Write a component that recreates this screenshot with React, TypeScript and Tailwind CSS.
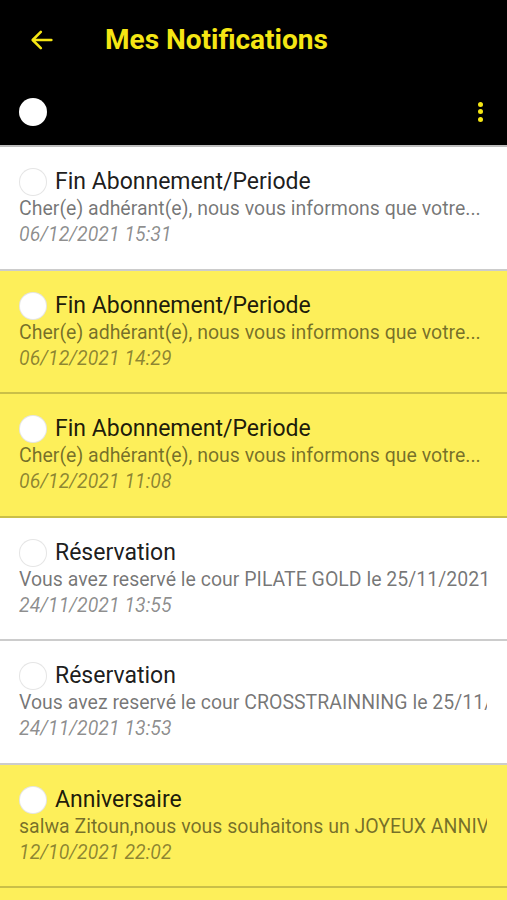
import React from "react";

type Item = { title: string; body: string; date: string; unread: boolean };

const items: Item[] = [
  { title: "Fin Abonnement/Periode", body: "Cher(e) adhérant(e), nous vous informons que votre...", date: "06/12/2021 15:31", unread: false },
  { title: "Fin Abonnement/Periode", body: "Cher(e) adhérant(e), nous vous informons que votre...", date: "06/12/2021 14:29", unread: true },
  { title: "Fin Abonnement/Periode", body: "Cher(e) adhérant(e), nous vous informons que votre...", date: "06/12/2021 11:08", unread: true },
  { title: "Réservation", body: "Vous avez reservé le cour PILATE GOLD le 25/11/2021 à 18:00", date: "24/11/2021 13:55", unread: false },
  { title: "Réservation", body: "Vous avez reservé le cour CROSSTRAINNING le 25/11/2021 à 19:00", date: "24/11/2021 13:53", unread: false },
  { title: "Anniversaire", body: "salwa Zitoun,nous vous souhaitons un JOYEUX ANNIVERSAIRE", date: "12/10/2021 22:02", unread: true },
  { title: "Anniversaire", body: "salwa Zitoun,nous vous souhaitons un JOYEUX ANNIVERSAIRE", date: "12/10/2020 22:02", unread: true },
];

export default function App() {
  return (
    <div className="w-[507px] h-[900px] overflow-hidden bg-white" style={{ fontFamily: "Roboto, 'Noto Sans', sans-serif" }}>
      <div className="bg-black border-b-2 border-[#bdbdbd]">
        <div className="h-[80px] flex items-center">
          <div className="w-[105px] pl-[28px] flex items-center">
            <svg width="28" height="28" viewBox="0 0 24 24" fill="none" stroke="#f5e614" strokeWidth="2.2" strokeLinecap="round" strokeLinejoin="round">
              <path d="M20 12H4.5" />
              <path d="M11 5l-7 7 7 7" />
            </svg>
          </div>
          <div className="text-[28px] font-bold text-[#f5e614] leading-none">Mes Notifications</div>
        </div>
        <div className="h-[65px] flex items-center justify-between pl-[19px] pr-[24px] pb-[2px]">
          <div className="w-[28px] h-[28px] rounded-full bg-white" />
          <div className="flex flex-col gap-[2.5px] items-center">
            <div className="w-[5px] h-[5px] rounded-full bg-[#f5e614]" />
            <div className="w-[5px] h-[5px] rounded-full bg-[#f5e614]" />
            <div className="w-[5px] h-[5px] rounded-full bg-[#f5e614]" />
          </div>
        </div>
      </div>
      <div className="flex flex-col">
        {items.map((it, i) => (
          <div
            key={i}
            className={
              "pl-[19px] pr-[20px] pt-[21px] pb-[20.5px] border-b-2 border-black/20 " +
              (it.unread ? "bg-[#fdef5a]" : "bg-white")
            }
          >
            <div className="flex items-center gap-[8px] h-[28px]">
              <div className="w-[28px] h-[28px] rounded-full bg-white border-[1.5px] border-black/10 shrink-0" />
              <div className="text-[23px] text-black/90 leading-[28px]">{it.title}</div>
            </div>
            <div className="text-[19.5px] leading-[26px] text-black/55 whitespace-nowrap overflow-hidden">{it.body}</div>
            <div className="text-[19.5px] leading-[26px] text-black/45 italic">{it.date}</div>
          </div>
        ))}
      </div>
    </div>
  );
}
